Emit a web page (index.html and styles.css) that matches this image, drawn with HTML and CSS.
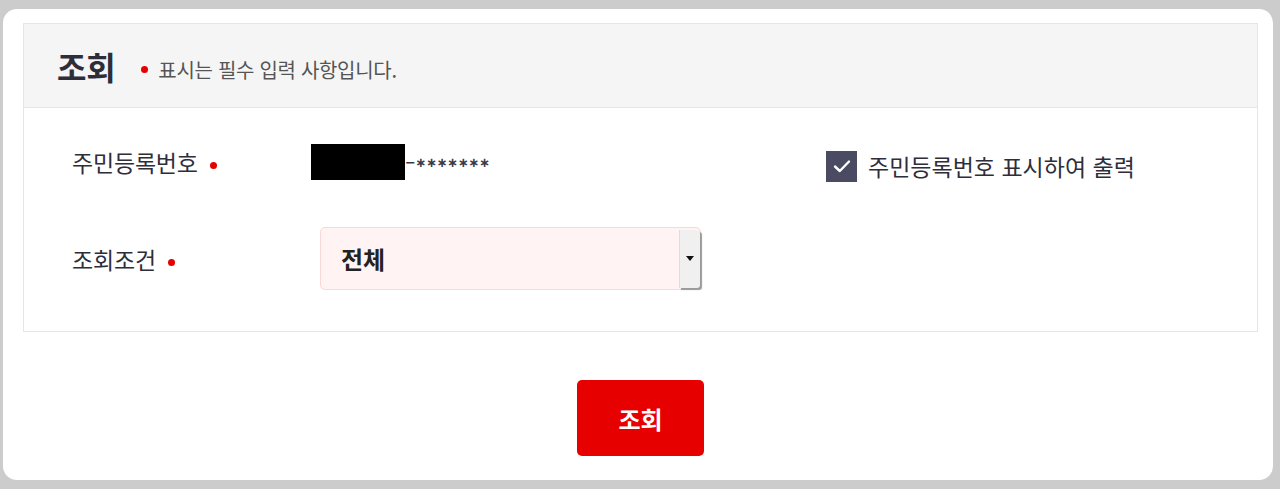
FILE: index.html
```html
<!DOCTYPE html>
<html lang="ko">
<head>
  <meta charset="UTF-8">
  <title>조회</title>
  <link rel="stylesheet" href="styles.css">
</head>
<body>
  <div class="card">
    <div class="panel">
      <div class="panel-head">
        <h2>조회</h2>
        <p class="notice"><span class="dot"></span>표시는 필수 입력 사항입니다.</p>
      </div>
      <div class="panel-body">
        <div class="row">
          <div class="label label-wide">주민등록번호<span class="dot"></span></div>
          <div class="value">
            <span class="masked"></span><span class="rest">−∗∗∗∗∗∗∗</span>
          </div>
          <label class="check">
            <span class="box">
              <svg width="18" height="14" viewBox="0 0 18 14"><path d="M2 7.5 L6.8 12 L16 2.5" fill="none" stroke="#fff" stroke-width="2.4" stroke-linecap="round" stroke-linejoin="round"/></svg>
            </span>
            주민등록번호 표시하여 출력
          </label>
        </div>
        <div class="row row-second">
          <div class="label">조회조건<span class="dot"></span></div>
          <div class="select">
            <span class="select-text">전체</span>
            <span class="select-arrow"></span>
          </div>
        </div>
      </div>
    </div>
    <div class="actions">
      <button class="btn-search">조회</button>
    </div>
  </div>
</body>
</html>
```

FILE: styles.css
```css
body {
  margin: 0;
  background: #cccccc;
  font-family: "Noto Sans CJK KR", "Noto Sans", sans-serif;
  color: #2e2e3a;
}
.card {
  background: #fff;
  margin: 9px 7px 9px 3px;
  padding: 14px 15px 24px 20px;
  border-radius: 14px;
  height: 433px;
}
.panel {
  border: 1px solid #e6e6e6;
}
.panel-head {
  display: flex;
  align-items: center;
  height: 83px;
  padding-left: 33px;
  background: #f5f5f5;
  border-bottom: 1px solid #e6e6e6;
}
.panel-head h2 {
  margin: 0;
  font-size: 32px;
  font-weight: bold;
  color: #2e2e3a;
  letter-spacing: -0.3px;
}
.notice {
  display: flex;
  align-items: center;
  margin: 8px 0 0 26px;
  font-size: 20px;
  color: #555;
  letter-spacing: -0.3px;
}
.notice .dot {
  margin: 0 10px 0 0;
}
.dot {
  display: inline-block;
  width: 7px;
  height: 7px;
  border-radius: 50%;
  background: #e60000;
  margin-left: 12px;
  vertical-align: middle;
}
.panel-body {
  padding: 36px 0 41px 48px;
}
.row {
  display: flex;
  align-items: center;
  height: 36px;
}
.row-second {
  margin-top: 47px;
  height: 63px;
}
.label {
  width: 248px;
  font-size: 23px;
  color: #2e2e3a;
  letter-spacing: -0.2px;
}
.label-wide {
  width: 239px;
}
.value {
  display: flex;
  align-items: center;
  width: 515px;
}
.masked {
  display: inline-block;
  width: 94px;
  height: 36px;
  background: #000;
}
.rest {
  font-family: "DejaVu Sans", sans-serif;
  font-size: 13px;
  font-weight: bold;
  color: #3a3a48;
  letter-spacing: -0.3px;
}
.check {
  display: flex;
  align-items: center;
  gap: 11px;
  font-size: 23px;
  color: #2e2e3a;
  letter-spacing: 0;
  margin-top: 8px;
}
.box {
  display: flex;
  align-items: center;
  justify-content: center;
  width: 31px;
  height: 31px;
  background: #4a4a63;
}
.select {
  display: flex;
  align-items: stretch;
  width: 379px;
  height: 61px;
  border: 1px solid #f8d8d8;
  border-radius: 5px;
  background: #fff3f3;
}
.select-text {
  flex: 1;
  display: flex;
  align-items: center;
  padding-left: 20px;
  font-size: 24px;
  font-weight: bold;
  color: #222;
}
.select-arrow {
  position: relative;
  width: 20px;
  margin: 2px 0 1px;
  background: #f0f0f0;
  border-left: 1px solid #ddd;
  box-shadow: 2px 2px 1px #9a9a9a;
  border-radius: 0 3px 3px 0;
}
.select-arrow::after {
  content: "";
  position: absolute;
  left: 6px;
  top: 26px;
  border-left: 4px solid transparent;
  border-right: 4px solid transparent;
  border-top: 5px solid #111;
}
.actions {
  display: flex;
  justify-content: center;
  padding-top: 48px;
}
.btn-search {
  width: 127px;
  height: 76px;
  border: none;
  border-radius: 5px;
  background: #e60000;
  color: #fff;
  font-family: inherit;
  font-size: 24px;
  font-weight: bold;
  cursor: pointer;
}
```
